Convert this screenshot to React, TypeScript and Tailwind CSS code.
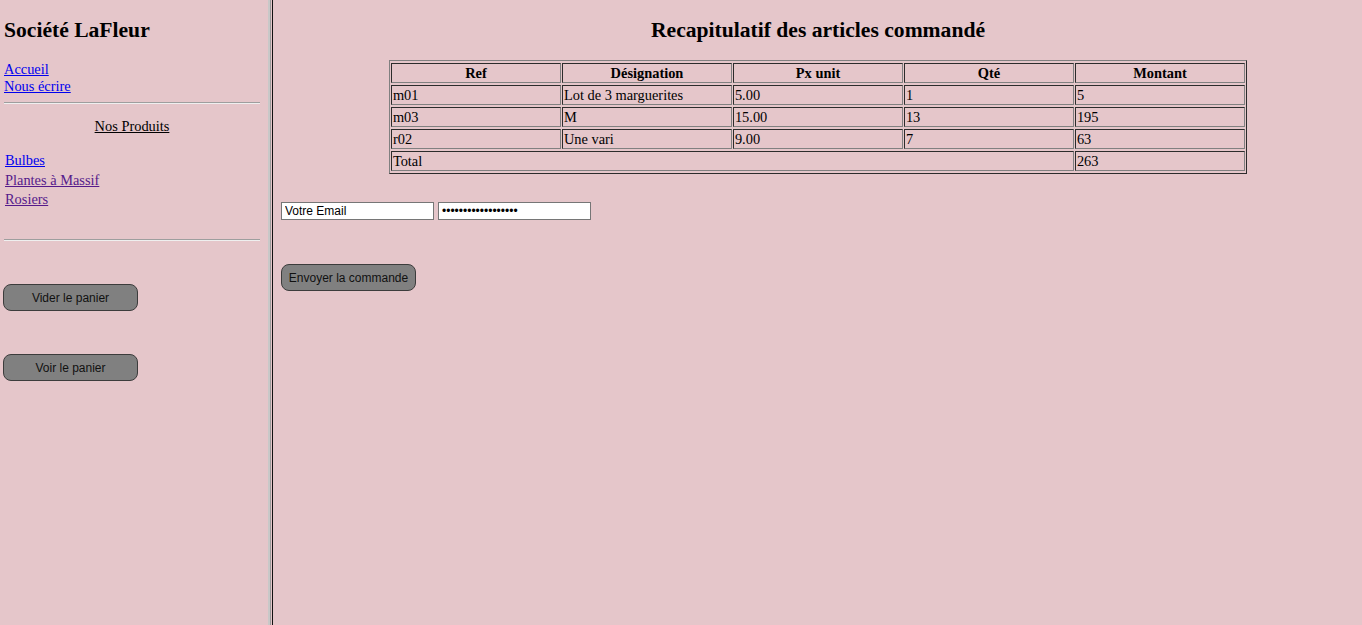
const rows = [
  { ref: "m01", des: "Lot de 3 marguerites", px: "5.00", qte: "1", montant: "5" },
  { ref: "m03", des: "M", px: "15.00", qte: "13", montant: "195" },
  { ref: "r02", des: "Une vari", px: "9.00", qte: "7", montant: "63" },
];

const cell = "border border-[#808080] [border-style:inset] px-[0.9px] py-0 h-[20px] leading-[16.6px] text-left align-middle";
const head = "border border-[#808080] [border-style:inset] px-[0.9px] py-0 h-[20px] leading-[16.6px] text-center font-bold align-middle";
const btn =
  "w-[135px] h-[27px] rounded-[8px] bg-[#808080] border border-[#3c3c3c] text-[12px] text-[#111] font-['Liberation_Sans',Arial,sans-serif] leading-none";

function Hr() {
  return <div className="w-[256px] border-t border-t-[#9e9e9e] border-b border-b-[#efefef]" />;
}

export default function App() {
  return (
    <div className="flex w-[1362px] h-[625px] overflow-hidden bg-[#e5c6ca] text-black font-['Liberation_Serif','Times_New_Roman',serif] text-[14.4px] leading-[16.56px]">
      {/* Left frame */}
      <div className="w-[268px] shrink-0 pl-[4px] flex flex-col">
        <h2 className="mt-[18px] text-[21.6px] leading-[25px] font-bold">Société LaFleur</h2>
        <div className="mt-[18px] flex flex-col">
          <a href="#" className="text-[#0000ee] underline self-start">Accueil</a>
          <a href="#" className="text-[#0000ee] underline self-start">Nous écrire</a>
        </div>
        <div className="mt-[8px]">
          <Hr />
        </div>
        <p className="mt-[14px] w-[256px] text-center">
          <span className="underline">Nos Produits</span>
        </p>
        <div className="mt-[16px] flex flex-col pl-px">
          <a href="#" className="h-[19.5px] flex items-center text-[#0000ee] underline self-start">Bulbes</a>
          <a href="#" className="h-[19.5px] flex items-center text-[#551a8b] underline self-start">Plantes à Massif</a>
          <a href="#" className="h-[19.5px] flex items-center text-[#551a8b] underline self-start">Rosiers</a>
        </div>
        <div className="mt-[30px]">
          <Hr />
        </div>
        <div className="mt-[43px] -ml-px">
          <button className={btn}>Vider le panier</button>
        </div>
        <div className="mt-[43px] -ml-px">
          <button className={btn}>Voir le panier</button>
        </div>
      </div>

      {/* Frame border */}
      <div className="flex shrink-0 h-full">
        <div className="w-[2px] bg-[#c8c8c8]" />
        <div className="w-px bg-[#9a9a9a]" />
        <div className="w-px" />
        <div className="w-px bg-[#111]" />
        <div className="w-px" />
      </div>

      {/* Main frame */}
      <div className="flex-1 pl-[7px] pr-[7px] flex flex-col">
        <h2 className="mt-[18px] text-[21.6px] leading-[25px] font-bold text-center">
          Recapitulatif des articles commandé
        </h2>
        <table className="mt-[17px] mx-auto w-[858px] table-fixed border-separate [border-spacing:1.8px_2px] border border-[#808080] [border-style:outset]">
          <thead>
            <tr>
              <th className={head}>Ref</th>
              <th className={head}>Désignation</th>
              <th className={head}>Px unit</th>
              <th className={head}>Qté</th>
              <th className={head}>Montant</th>
            </tr>
          </thead>
          <tbody>
            {rows.map((r) => (
              <tr key={r.ref}>
                <td className={cell}>{r.ref}</td>
                <td className={cell}>{r.des}</td>
                <td className={cell}>{r.px}</td>
                <td className={cell}>{r.qte}</td>
                <td className={cell}>{r.montant}</td>
              </tr>
            ))}
            <tr>
              <td className={cell} colSpan={4}>Total</td>
              <td className={cell}>263</td>
            </tr>
          </tbody>
        </table>

        <div className="mt-[28px] flex gap-[4px] font-['Liberation_Sans',Arial,sans-serif] text-[12px]">
          <input
            type="text"
            defaultValue="Votre Email"
            className="w-[153px] h-[18px] bg-white border border-[#767676] px-[3px] text-black outline-none"
          />
          <input
            type="password"
            defaultValue="xxxxxxxxxxxxxxxxxx"
            className="w-[153px] h-[18px] bg-white border border-[#767676] px-[3px] text-black outline-none"
          />
        </div>

        <div className="mt-[44px]">
          <button className={btn}>Envoyer la commande</button>
        </div>
      </div>
    </div>
  );
}
